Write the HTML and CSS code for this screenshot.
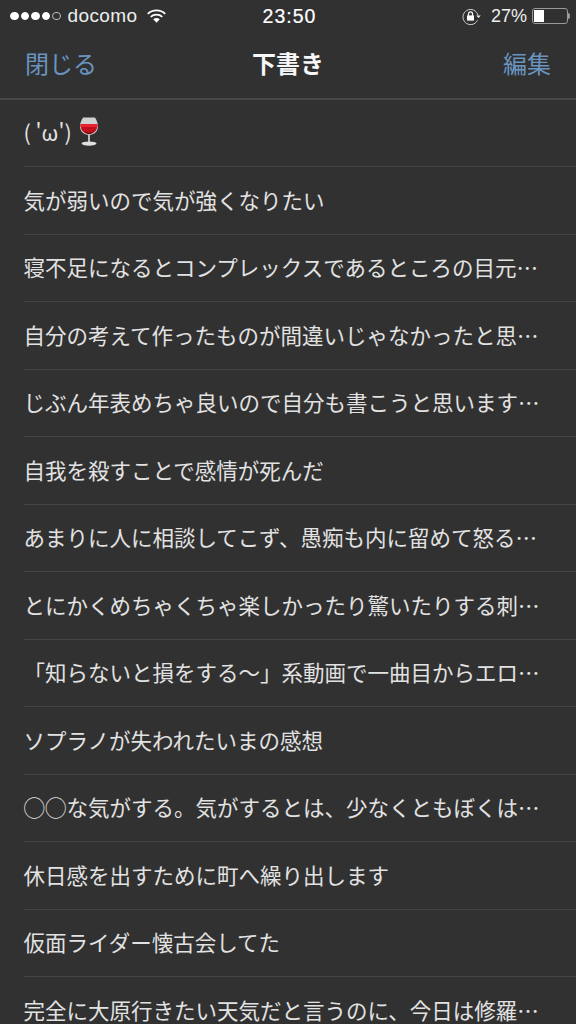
FILE: index.html
```html
<!DOCTYPE html>
<html lang="ja">
<head>
<meta charset="utf-8">
<title>下書き</title>
<link rel="stylesheet" href="styles.css">
</head>
<body>
<div class="screen">
  <div class="status">
    <div class="status-left">
      <span class="signal"><i class="dot"></i><i class="dot"></i><i class="dot"></i><i class="dot"></i><i class="dot empty"></i></span>
      <span class="carrier">docomo</span>
      <svg class="wifi" width="19" height="14" viewBox="0 0 19 14"><path d="M.8 4.800C5.600.3 13.400.3 18.200 4.800" fill="none" stroke="#fff" stroke-width="1.800"/><path d="M3.700 7.800c3.300-3 8.300-3 11.600 0" fill="none" stroke="#fff" stroke-width="1.800"/><path d="M6.200 10.200c2-1.500 4.600-1.500 6.600 0L9.500 13.800z" fill="#fff"/></svg>
    </div>
    <div class="time">23:50</div>
    <div class="status-right">
      <svg class="lock" width="19" height="17" viewBox="0 0 19 17"><path d="M15.400 12.400A7.600 7.600 0 1 1 16 7.400" fill="none" stroke="#d0d0d0" stroke-width="1"/><path d="M14.200 7.400h4.600l-2.300 2.500z" fill="#e8e8e8"/><rect x="5" y="7.400" width="7" height="5.200" fill="#fff"/><path d="M6.500 7.800V5.900a2 2 0 0 1 4 0v1.900" fill="none" stroke="#fff" stroke-width="1.200"/></svg>
      <span class="pct">27%</span>
      <span class="battery"><span class="battery-fill"></span></span>
    </div>
  </div>
  <header class="nav">
    <span class="nav-btn">閉じる</span>
    <span class="nav-title">下書き</span>
    <span class="nav-btn nav-btn-end">編集</span>
  </header>
  <ul class="list">
    <li class="row"><span class="text">( 'ω')</span><svg class="wine" width="18" height="29" viewBox="0 0 18 29"><path d="M3 .5h12c1.800 3 3 6 3 8.700 0 5.200-3.700 8.600-9 8.600s-9-3.400-9-8.600C0 6.500 1.200 3.500 3 .5z" fill="#cfd2d2"/><path d="M.6 7h16.800c.4 5.800-3 10-8.400 10S.2 12.800.6 7z" fill="#c0101c"/><path d="M.6 7h16.800l.1 3H.5z" fill="#e8222e"/><path d="M4 14c2.800 2.400 7.200 2.400 10 0-1.500 2-3 3-5 3s-3.500-1-5-3z" fill="#5d0a10"/><rect x="8" y="17" width="2" height="8" fill="#b9bcbc"/><ellipse cx="9" cy="26.600" rx="7.500" ry="2.100" fill="#dfe1e1"/></svg></li>
    <li class="row"><span class="text">気が弱いので気が強くなりたい</span></li>
    <li class="row"><span class="text">寝不足になるとコンプレックスであるところの目元…</span></li>
    <li class="row"><span class="text">自分の考えて作ったものが間違いじゃなかったと思…</span></li>
    <li class="row"><span class="text">じぶん年表めちゃ良いので自分も書こうと思います…</span></li>
    <li class="row"><span class="text">自我を殺すことで感情が死んだ</span></li>
    <li class="row"><span class="text">あまりに人に相談してこず、愚痴も内に留めて怒る…</span></li>
    <li class="row"><span class="text">とにかくめちゃくちゃ楽しかったり驚いたりする刺…</span></li>
    <li class="row"><span class="text">「知らないと損をする～」系動画で一曲目からエロ…</span></li>
    <li class="row"><span class="text">ソプラノが失われたいまの感想</span></li>
    <li class="row"><span class="text">◯◯な気がする。気がするとは、少なくともぼくは…</span></li>
    <li class="row"><span class="text">休日感を出すために町へ繰り出します</span></li>
    <li class="row"><span class="text">仮面ライダー懐古会してた</span></li>
    <li class="row"><span class="text">完全に大原行きたい天気だと言うのに、今日は修羅…</span></li>
  </ul>
</div>
</body>
</html>
```
FILE: styles.css
```css
html, body {
  margin: 0;
  padding: 0;
  background: #313131;
}
.screen {
  width: 576px;
  height: 1024px;
  overflow: hidden;
  background: #313131;
  font-family: "Noto Sans CJK JP", "Liberation Sans", sans-serif;
  color: #e2e2e2;
}
.status {
  height: 32px;
  display: grid;
  grid-template-columns: 1fr auto 1fr;
  align-items: center;
  font-family: "Liberation Sans", sans-serif;
  font-size: 18px;
  color: #eeeeee;
}
.status-left {
  display: flex;
  align-items: center;
  padding-left: 10px;
}
.signal {
  display: flex;
  gap: 2px;
  margin-right: 7px;
}
.dot {
  box-sizing: border-box;
  width: 8.500px;
  height: 8.500px;
  border-radius: 50%;
  background: #fff;
  border: 1px solid #fff;
}
.dot.empty {
  background: transparent;
  border-color: #bbb;
}
.carrier {
  font-size: 19px;
  letter-spacing: 0.400px;
}
.wifi {
  margin-left: 9px;
}
.time {
  font-size: 19.500px;
  letter-spacing: 1px;
  padding-left: 3px;
  color: #fff;
  -webkit-text-stroke: 0.2px #fff;
}
.status-right {
  display: flex;
  align-items: center;
  justify-content: flex-end;
  padding-right: 8px;
}
.lock {
  margin-right: 10px;
}
.pct {
  margin-right: 5px;
}
.battery {
  position: relative;
  box-sizing: border-box;
  display: block;
  width: 36px;
  height: 16px;
  border: 1px solid #9a9a9a;
  border-radius: 3px;
  padding: 1px;
}
.battery::after {
  content: "";
  position: absolute;
  right: -3px;
  top: 4px;
  width: 2px;
  height: 6px;
  background: #9a9a9a;
  border-radius: 0 2px 2px 0;
}
.battery-fill {
  display: block;
  width: 9.500px;
  height: 100%;
  background: #fff;
}
.nav {
  box-sizing: border-box;
  height: 67.500px;
  padding: 0 25px;
  display: grid;
  grid-template-columns: 1fr auto 1fr;
  align-items: center;
  border-bottom: 2px solid #484848;
}
.nav-btn {
  font-size: 24px;
  color: #6a94c0;
  line-height: 1;
  margin-top: -3px;
}
.nav-btn-end {
  justify-self: end;
}
.nav-title {
  font-size: 24px;
  font-weight: 700;
  color: #f7f7f7;
  line-height: 1;
  margin-top: -3px;
}
.list {
  list-style: none;
  margin: 0;
  padding: 0 0 0 23.500px;
}
.row {
  box-sizing: border-box;
  height: 67.500px;
  display: flex;
  align-items: center;
  gap: 8px;
  padding-bottom: 2px;
  border-bottom: 1px solid #454545;
}
.text {
  font-size: 21.500px;
  line-height: 1;
  white-space: nowrap;
}
.wine {
  flex: none;
}
```
